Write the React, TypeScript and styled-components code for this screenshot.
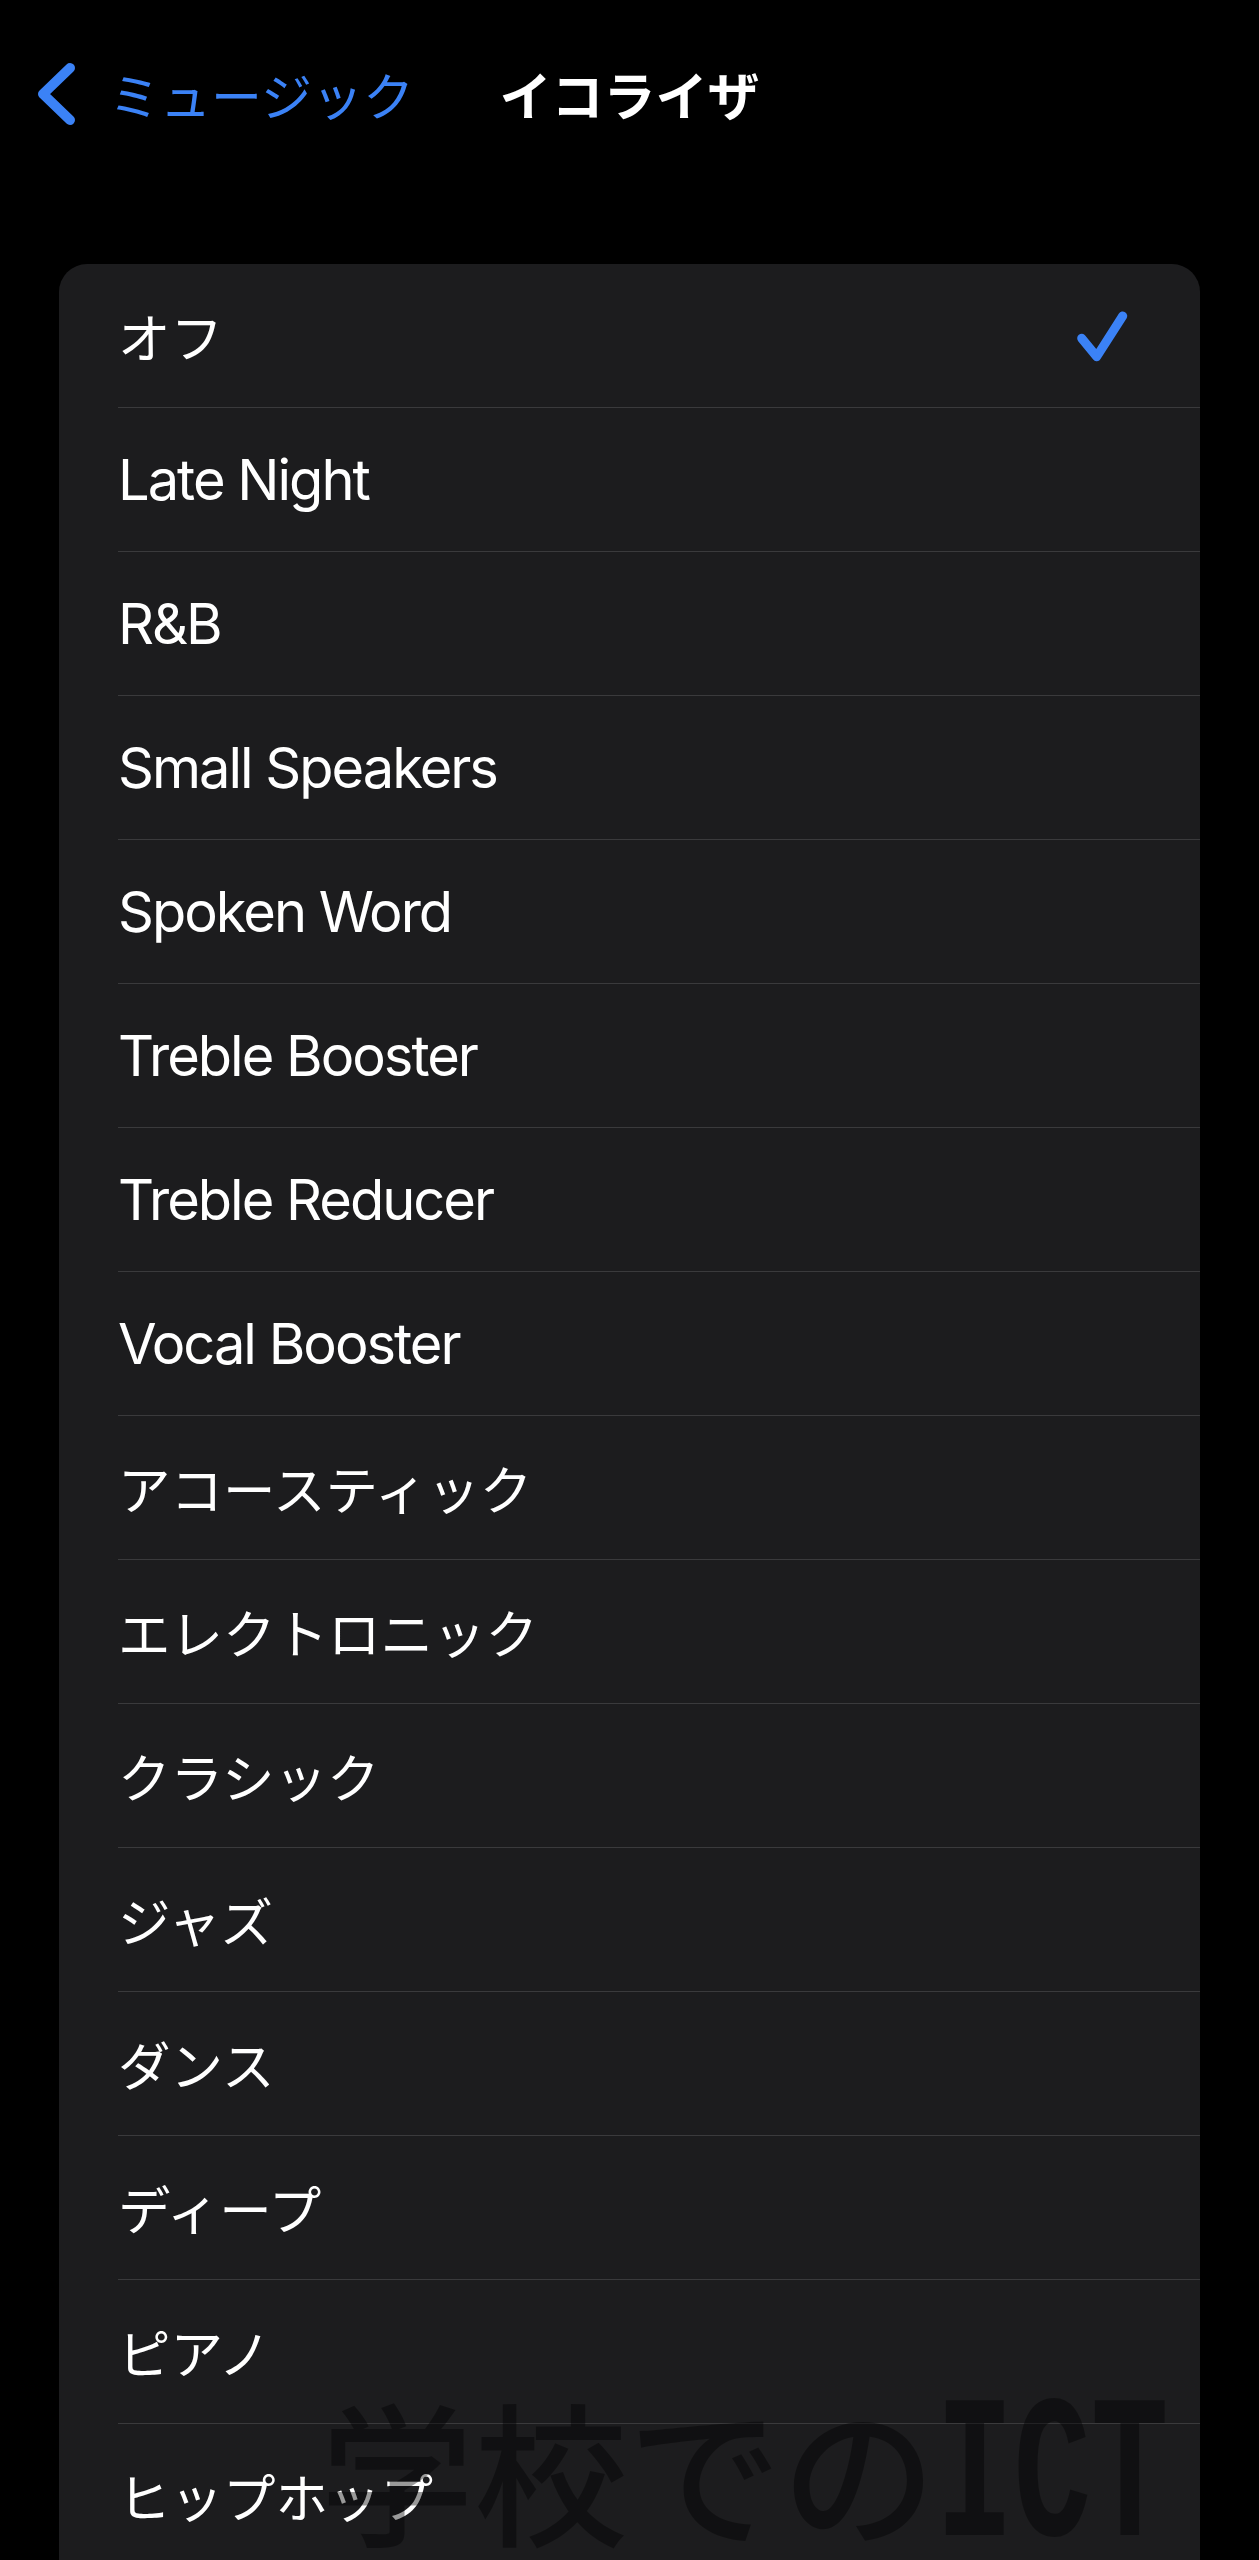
import React from "react";
import styled, { createGlobalStyle } from "styled-components";

const GlobalStyle = createGlobalStyle`
  html, body {
    margin: 0;
    padding: 0;
    background: #000;
  }
  body {
    font-family: "Inter", "Noto Sans CJK JP", sans-serif;
    -webkit-font-smoothing: antialiased;
  }
`;

const Screen = styled.div`
  position: relative;
  height: 2560px;
  overflow: hidden;
  background: #000;
`;

const NavBar = styled.header`
  display: grid;
  grid-template-columns: 1fr auto 1fr;
  align-items: center;
  height: 188px;
  padding: 0 36px;
`;

const BackButton = styled.div`
  display: flex;
  align-items: center;
  gap: 31px;
  color: #3b82f6;
  font-family: "Noto Sans CJK JP", sans-serif;
  font-size: 51px;
  line-height: 1;
`;

const Title = styled.h1`
  margin: 0;
  color: #fff;
  font-family: "Noto Sans CJK JP", sans-serif;
  font-size: 52px;
  font-weight: 700;
  line-height: 1;
`;

const Card = styled.section`
  margin: 76px 59px 0;
  background: #1c1c1e;
  border-radius: 28px;
  overflow: hidden;
`;

const Row = styled.div`
  display: flex;
  padding-left: 59px;
`;

const RowInner = styled.div`
  flex: 1;
  height: 143px;
  display: flex;
  align-items: center;
  justify-content: space-between;
  padding-right: 71px;
  border-bottom: 1px solid #3a3a3c;
`;

const Label = styled.span<{ $cjk: boolean }>`
  color: #fff;
  font-family: ${(p) => (p.$cjk ? '"Noto Sans CJK JP", sans-serif' : '"Inter", sans-serif')};
  font-size: ${(p) => (p.$cjk ? "52.5px" : "56px")};
  letter-spacing: ${(p) => (p.$cjk ? "0" : "-2px")};
  line-height: 1;
`;

const Watermark = styled.div`
  position: absolute;
  left: 320px;
  top: 2378px;
  display: flex;
  align-items: baseline;
  color: rgba(0, 0, 0, 0.4);
  pointer-events: none;
  white-space: nowrap;
`;

const WatermarkKana = styled.span`
  font-family: "Noto Sans CJK JP", sans-serif;
  font-size: 154px;
  font-weight: 500;
  line-height: 1;
`;

const WatermarkLatin = styled.span`
  display: inline-block;
  font-family: "Liberation Mono", monospace;
  font-size: 205px;
  font-weight: 700;
  line-height: 1;
  transform: scaleX(0.63);
  transform-origin: left center;
`;

const presets = [
  "オフ",
  "Late Night",
  "R&B",
  "Small Speakers",
  "Spoken Word",
  "Treble Booster",
  "Treble Reducer",
  "Vocal Booster",
  "アコースティック",
  "エレクトロニック",
  "クラシック",
  "ジャズ",
  "ダンス",
  "ディープ",
  "ピアノ",
  "ヒップホップ",
  "フラット",
  "ベースブースター",
];

const Chevron = () => (
  <svg width="42" height="64" viewBox="0 0 42 64" fill="none">
    <polyline
      points="34,6 7,32 34,58"
      stroke="#3b82f6"
      strokeWidth="10"
      strokeLinecap="round"
      strokeLinejoin="round"
    />
  </svg>
);

const Check = () => (
  <svg width="54" height="52" viewBox="0 0 54 52" fill="none">
    <polyline
      points="6.7,28.3 21.7,46.7 47.7,6"
      stroke="#3b82f6"
      strokeWidth="9"
      strokeLinecap="round"
      strokeLinejoin="round"
    />
  </svg>
);

export default function App() {
  const selected = "オフ";
  return (
    <>
      <GlobalStyle />
      <Screen>
        <NavBar>
          <BackButton>
            <Chevron />
            <span>ミュージック</span>
          </BackButton>
          <Title>イコライザ</Title>
          <div />
        </NavBar>
        <Card>
          {presets.map((name) => (
            <Row key={name}>
              <RowInner>
                <Label $cjk={/[^\x00-\x7F]/.test(name)}>{name}</Label>
                {name === selected && <Check />}
              </RowInner>
            </Row>
          ))}
        </Card>
        <Watermark>
          <WatermarkKana>学校での</WatermarkKana>
          <WatermarkLatin>ICT</WatermarkLatin>
        </Watermark>
      </Screen>
    </>
  );
}
